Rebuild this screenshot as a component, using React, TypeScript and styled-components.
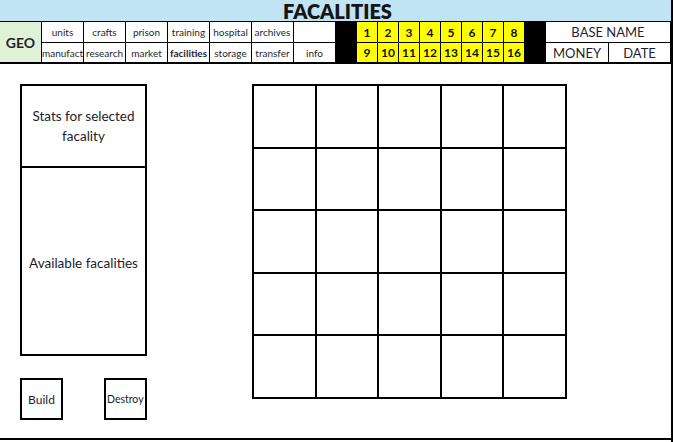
import React from "react";
import styled, { createGlobalStyle } from "styled-components";

const GlobalStyle = createGlobalStyle`
  html, body {
    margin: 0;
    padding: 0;
    background: #fff;
  }
  body {
    font-family: "Lato", "Liberation Sans", sans-serif;
    color: #1a1a1a;
  }
  * {
    box-sizing: border-box;
  }
`;

const Page = styled.div`
  width: 673px;
  height: 442px;
  border-right: 2px solid #000;
  display: flex;
  flex-direction: column;
`;

const Header = styled.div`
  display: grid;
  grid-template-columns: repeat(8, 42px) repeat(10, 21px) 63px 62px;
  grid-template-rows: 21px 21px 20px;
  border-bottom: 2px solid #000;
  height: 64px;
`;

const Title = styled.div`
  grid-column: 1 / -1;
  background: #c0e4f4;
  font-size: 20px;
  font-weight: 800;
  display: flex;
  align-items: center;
  justify-content: center;
  padding-left: 4px;
  color: #151515;
`;

const Cell = styled.div<{ $bold?: boolean }>`
  border-top: 1px solid #000;
  border-right: 1px solid #000;
  display: flex;
  align-items: center;
  justify-content: center;
  font-size: 10px;
  font-weight: ${(p) => (p.$bold ? 700 : 400)};
  white-space: nowrap;
  overflow: hidden;
  color: #1f1f2e;
`;

const NavCell = styled(Cell)<{ $clip?: boolean }>`
  justify-content: ${(p) => (p.$clip ? "flex-start" : "center")};
`;

const GeoCell = styled(Cell)`
  grid-row: 2 / 4;
  grid-column: 1;
  background: #dff2d8;
  font-size: 14px;
  font-weight: 700;
`;

const BlackCell = styled.div<{ $col: number }>`
  grid-row: 2 / 4;
  grid-column: ${(p) => p.$col};
  background: #000;
  border-top: 1px solid #000;
`;

const NumCell = styled(Cell)`
  background: #ffff00;
  font-size: 12px;
  font-weight: 700;
  color: #111;
`;

const InfoCell = styled(Cell)`
  font-size: 13px;
  color: #1f1f2e;
`;

const Body = styled.div`
  display: flex;
  align-items: flex-start;
  padding: 20px 0 0 20px;
  border-bottom: 2px solid #000;
  height: 376px;
  flex: none;
`;

const LeftColumn = styled.div`
  width: 127px;
  display: flex;
  flex-direction: column;
`;

const Panel = styled.div`
  height: 272px;
  border: 2px solid #000;
  display: flex;
  flex-direction: column;
`;

const PanelSection = styled.div<{ $grow?: boolean }>`
  flex: ${(p) => (p.$grow ? 1 : "none")};
  height: ${(p) => (p.$grow ? "auto" : "82px")};
  border-bottom: ${(p) => (p.$grow ? "none" : "2px solid #000")};
  display: flex;
  align-items: center;
  justify-content: center;
  text-align: center;
  font-size: 13.5px;
  line-height: 20px;
  padding: ${(p) => (p.$grow ? "4px 4px 0" : "0 6px")};
  color: #1c1c28;
`;

const ButtonRow = styled.div`
  margin-top: 22px;
  display: flex;
  justify-content: space-between;
`;

const ActionButton = styled.div<{ $left?: boolean }>`
  width: 43px;
  height: 42px;
  border: 2px solid #000;
  display: flex;
  align-items: center;
  justify-content: ${(p) => (p.$left ? "flex-start" : "center")};
  padding-left: ${(p) => (p.$left ? "1px" : "0")};
  font-size: ${(p) => (p.$left ? "10.5px" : "12px")};
  white-space: nowrap;
  color: #1c1c28;
`;

const FacilityGrid = styled.div`
  margin-left: 105px;
  width: 315px;
  height: 315px;
  display: grid;
  grid-template-columns: repeat(5, 1fr);
  grid-template-rows: repeat(5, 1fr);
  gap: 2px;
  padding: 2px;
  background: #000;
`;

const Slot = styled.div`
  background: #fff;
`;

const topNav = ["units", "crafts", "prison", "training", "hospital", "archives", ""];
const bottomNav = ["manufact", "research", "market", "facilities", "storage", "transfer", "info"];

export default function App() {
  return (
    <>
      <GlobalStyle />
      <Page>
        <Header>
          <Title>FACALITIES</Title>
          <GeoCell>GEO</GeoCell>
          {topNav.map((n, i) => (
            <NavCell key={"t" + i} style={{ gridRow: 2, gridColumn: i + 2 }}>
              {n}
            </NavCell>
          ))}
          <BlackCell $col={9} />
          {[1, 2, 3, 4, 5, 6, 7, 8].map((n, i) => (
            <NumCell key={n} style={{ gridRow: 2, gridColumn: i + 10 }}>
              {n}
            </NumCell>
          ))}
          <BlackCell $col={18} />
          <InfoCell style={{ gridRow: 2, gridColumn: "19 / 21" }}>BASE NAME</InfoCell>
          {bottomNav.map((n, i) => (
            <NavCell
              key={"b" + i}
              $clip={n === "manufact"}
              $bold={n === "facilities"}
              style={{ gridRow: 3, gridColumn: i + 2 }}
            >
              {n}
            </NavCell>
          ))}
          {[9, 10, 11, 12, 13, 14, 15, 16].map((n, i) => (
            <NumCell key={n} style={{ gridRow: 3, gridColumn: i + 10 }}>
              {n}
            </NumCell>
          ))}
          <InfoCell style={{ gridRow: 3, gridColumn: 19 }}>MONEY</InfoCell>
          <InfoCell style={{ gridRow: 3, gridColumn: 20 }}>DATE</InfoCell>
        </Header>
        <Body>
          <LeftColumn>
            <Panel>
              <PanelSection>Stats for selected facality</PanelSection>
              <PanelSection $grow>Available facalities</PanelSection>
            </Panel>
            <ButtonRow>
              <ActionButton>Build</ActionButton>
              <ActionButton $left>Destroy</ActionButton>
            </ButtonRow>
          </LeftColumn>
          <FacilityGrid>
            {Array.from({ length: 25 }).map((_, i) => (
              <Slot key={i} />
            ))}
          </FacilityGrid>
        </Body>
      </Page>
    </>
  );
}
